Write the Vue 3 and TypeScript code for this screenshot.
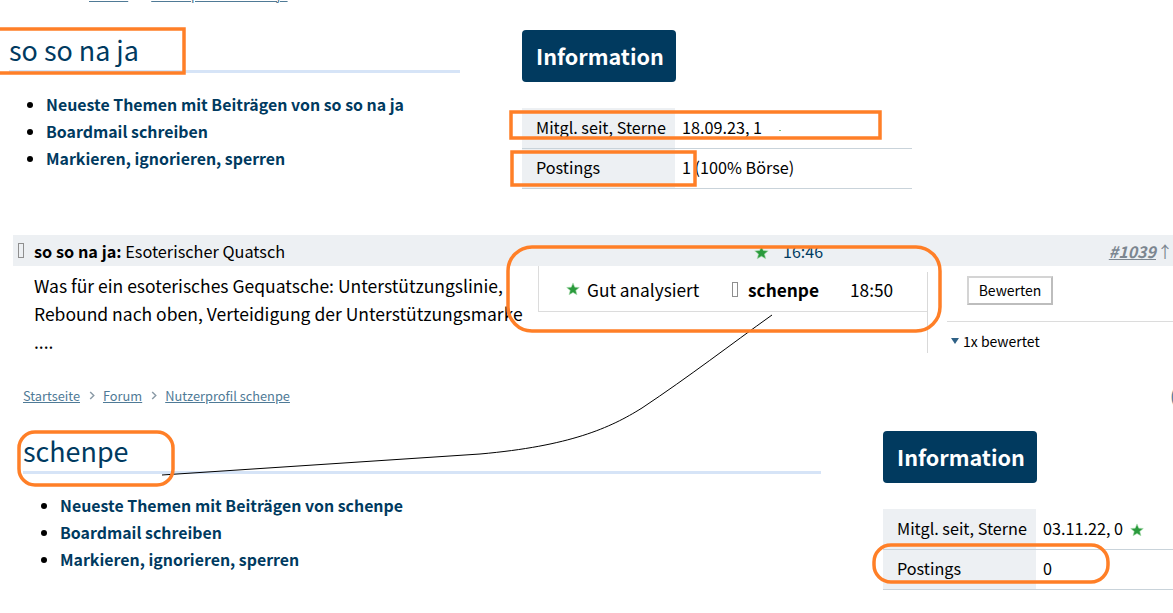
<script setup lang="ts">
interface Profile {
  name: string
  links: string[]
  joined: string
  postings: string
}

function linksFor(name: string): string[] {
  return [`Neueste Themen mit Beiträgen von ${name}`, 'Boardmail schreiben', 'Markieren, ignorieren, sperren']
}

const first: Profile = { name: 'so so na ja', links: linksFor('so so na ja'), joined: '18.09.23, 1', postings: '1 (100% Börse)' }
const second: Profile = { name: 'schenpe', links: linksFor('schenpe'), joined: '03.11.22, 0', postings: '0' }
const crumbs = ['Startseite', 'Forum', 'Nutzerprofil schenpe']
const STAR = 'M6 .8 7.5 4.4 11.4 4.7 8.4 7.2 9.4 11 6 9 2.6 11 3.6 7.2.6 4.7 4.5 4.4Z'
</script>

<template>
  <div class="page">
    <div class="top-crumbs"><a>Forum</a><a>Nutzerprofil so so na ja</a></div>

    <section class="profile profile-a">
      <div>
        <h1>{{ first.name }}</h1>
        <ul>
          <li v-for="link in first.links" :key="link">{{ link }}</li>
        </ul>
      </div>
      <div class="info">
        <h2>Information</h2>
        <table>
          <tbody>
            <tr>
              <th>Mitgl. seit, Sterne</th>
              <td>{{ first.joined }} <i class="speck"></i></td>
            </tr>
            <tr>
              <th>Postings</th>
              <td>{{ first.postings }}</td>
            </tr>
          </tbody>
        </table>
      </div>
    </section>

    <section class="post">
      <header class="post-bar">
        <span class="glyph"></span>
        <span class="post-title"><b>so so na ja:</b> Esoterischer Quatsch</span>
        <svg class="bar-star" viewBox="0 0 12 12"><path :d="STAR" /></svg>
        <span class="post-time">16:46</span>
        <a class="post-no">#1039</a>
        <span class="post-up">↑</span>
      </header>
      <div class="post-main">
        <p class="post-text">
          Was für ein esoterisches Gequatsche: Unterstützungslinie,<br />
          Rebound nach oben, Verteidigung der Unterstützungsmarke<br />
          ....
        </p>
        <aside class="post-side">
          <button type="button">Bewerten</button>
          <div class="rated"><i class="caret"></i>1x bewertet</div>
        </aside>
      </div>
      <div class="rating">
        <svg class="rating-star" viewBox="0 0 12 12"><path :d="STAR" /></svg>
        <span class="rating-label">Gut analysiert</span>
        <span class="glyph"></span>
        <b class="rating-user">schenpe</b>
        <span class="rating-time">18:50</span>
      </div>
    </section>

    <nav class="crumbs">
      <template v-for="(crumb, i) in crumbs" :key="crumb">
        <svg v-if="i" class="chev" viewBox="0 0 6 10"><path d="M1 1l4 4-4 4" /></svg>
        <a>{{ crumb }}</a>
      </template>
      <span class="edge">(</span>
    </nav>

    <section class="profile profile-b">
      <div>
        <h1>{{ second.name }}</h1>
        <ul>
          <li v-for="link in second.links" :key="link">{{ link }}</li>
        </ul>
      </div>
      <div class="info">
        <h2>Information</h2>
        <table>
          <tbody>
            <tr>
              <th>Mitgl. seit, Sterne</th>
              <td>
                {{ second.joined }}
                <svg class="inline-star" viewBox="0 0 12 12"><path :d="STAR" /></svg>
              </td>
            </tr>
            <tr>
              <th>Postings</th>
              <td>{{ second.postings }}</td>
            </tr>
          </tbody>
        </table>
      </div>
    </section>

    <!-- hand-drawn markup on top of the screenshot -->
    <svg class="marks" viewBox="0 0 1173 613">
      <path class="line" d="M162 475 L480 454 C570 446 610 428 642 408 C690 376 730 345 772 315" />
      <rect x="-4" y="29" width="188" height="44" />
      <rect x="511" y="112" width="369" height="26" />
      <rect x="512" y="152" width="183" height="33" />
      <rect x="508" y="247" width="432" height="84" rx="24" />
      <rect x="19" y="432" width="154" height="53" rx="16" />
      <rect x="874" y="545" width="234" height="37" rx="17" />
    </svg>
  </div>
</template>

<style>
body {
  margin: 0;
  background: #fff;
}
</style>

<style scoped>
.page {
  position: relative;
  width: 1173px;
  height: 613px;
  overflow: hidden;
  font-family: "Noto Sans CJK SC", "Noto Sans", sans-serif;
  font-size: 16px;
  color: #000;
}

.top-crumbs {
  display: flex;
  gap: 23px;
  height: 16px;
  margin-top: -14px;
  padding-left: 89px;
  font-size: 12.8px;
  line-height: 18px;
}

.top-crumbs a,
.crumbs a {
  color: #4f7a96;
  text-decoration: underline;
}

.profile {
  display: grid;
  column-gap: 62px;
}

.profile-a {
  grid-template-columns: 451px 390px;
  height: 207px;
  padding: 26px 0 0 9px;
}

.profile-b {
  grid-template-columns: 798px 290px;
  padding: 0 0 0 23px;
  margin-top: 24px;
}

.info {
  padding-top: 2px;
}

h1 {
  margin: 0;
  height: 42px;
  border-bottom: 3px solid #d6e4f7;
  font-size: 26.9px;
  font-weight: 400;
  line-height: 44px;
  color: #003a60;
}

ul {
  margin: 19px 0 0;
  padding-left: 37px;
  color: #003a60;
  font-size: 15.9px;
  font-weight: 600;
  line-height: 26.8px;
}

li::marker {
  color: #000;
}

h2 {
  display: block;
  width: 154px;
  height: 52px;
  margin: 0;
  padding-left: 14px;
  box-sizing: border-box;
  border-radius: 4px;
  background: #013a5f;
  color: #fff;
  font-size: 21.6px;
  font-weight: 600;
  line-height: 52px;
}

table {
  display: block;
  margin-top: 26px;
  border-collapse: collapse;
}

tr {
  border-bottom: 1px solid #c9d3da;
}

th,
td {
  height: 40px;
  padding: 0 0 2px;
  font-size: 16.2px;
  font-weight: 400;
  text-align: left;
  white-space: nowrap;
}

th {
  min-width: 153px;
  padding-left: 14px;
  box-sizing: border-box;
  background: #edf0f3;
}

td {
  width: 237px;
  padding-left: 7px;
  box-sizing: border-box;
}

.speck {
  display: inline-block;
  width: 2px;
  height: 1px;
  margin: 0 0 3px 13px;
  background: #6fc47a;
}

.inline-star {
  width: 14px;
  height: 14px;
  margin-left: 3px;
  vertical-align: -2px;
}

svg path {
  fill: #2a9a3c;
  stroke: #a9dcae;
  stroke-width: 0.5;
}

.post {
  position: relative;
  height: 118px;
  margin-left: 13px;
}

.post-bar {
  display: flex;
  align-items: center;
  height: 31px;
  background: #edf0f3;
}

.glyph {
  flex: none;
  width: 4px;
  height: 13px;
  border: 1px solid #8f8f8f;
}

.post-bar .glyph {
  margin-left: 5px;
}

.post-title {
  width: 723px;
  margin-left: 10px;
  font-size: 16.3px;
}

.post-title b {
  font-weight: 700;
}

.bar-star {
  width: 15px;
  height: 15px;
  margin-top: 3px;
}

.post-time {
  width: 327px;
  margin-left: 14px;
  color: #003a60;
}

.post-no {
  color: #7c8690;
  font-weight: 700;
  font-style: italic;
  text-decoration: underline;
}

.post-up {
  margin-left: 1px;
  color: #7c8690;
}

.post-main {
  display: flex;
  height: 87px;
}

.post-text {
  width: 915px;
  margin: 6px 0 0;
  padding-left: 21px;
  box-sizing: border-box;
  border-right: 1px solid #d9d9d9;
  font-size: 17.5px;
  line-height: 28px;
}

.post-side {
  flex: 1;
  padding: 10px 0 0 19px;
}

.post-side button {
  display: block;
  width: 86px;
  height: 29px;
  margin-left: 20px;
  padding: 0 0 2px;
  background: #fff;
  border: 2px solid #d4d4d4;
  border-right-color: #bdbdbd;
  border-bottom-color: #bdbdbd;
  font: inherit;
  font-size: 14px;
}

.rated {
  display: flex;
  align-items: center;
  margin-top: 16px;
  padding-top: 9px;
  border-top: 1px solid #dcdcdc;
  font-size: 14px;
  line-height: 20px;
}

.caret {
  width: 0;
  height: 0;
  margin: 0 4px 0 4px;
  border: 4.5px solid transparent;
  border-top: 6px solid #2f6186;
  border-bottom: 0;
}

/* rating popup sits over the post text */
.rating {
  position: absolute;
  left: 525px;
  top: 31px;
  display: flex;
  align-items: center;
  width: 389px;
  height: 46px;
  box-sizing: border-box;
  padding: 1px 0 0 27px;
  background: #fff;
  border-left: 1px solid #dcdcdc;
  border-bottom: 1px solid #dcdcdc;
  font-size: 17.3px;
}

.rating-star {
  width: 14px;
  height: 14px;
}

.rating-label {
  width: 145px;
  margin-left: 7px;
}

.rating-user {
  width: 102px;
  margin-left: 10px;
  font-weight: 700;
}

.crumbs {
  display: flex;
  align-items: center;
  height: 20px;
  margin-top: 32px;
  padding-left: 23px;
  font-size: 12.8px;
}

.chev {
  width: 6px;
  height: 9px;
  margin: 0 8px 0 9px;
}

.chev path {
  fill: none;
  stroke: #8a9aa6;
  stroke-width: 1.6;
}

.edge {
  margin-left: auto;
  margin-right: -3px;
  color: #4f7a96;
  font-size: 18px;
}

/* annotations are a free canvas over the whole page */
.marks {
  position: absolute;
  inset: 0;
  width: 1173px;
  height: 613px;
  pointer-events: none;
}

.marks rect {
  fill: none;
  stroke: #ff7f27;
  stroke-width: 3.5;
}

.marks .line {
  fill: none;
  stroke: #000;
  stroke-width: 1;
}
</style>
